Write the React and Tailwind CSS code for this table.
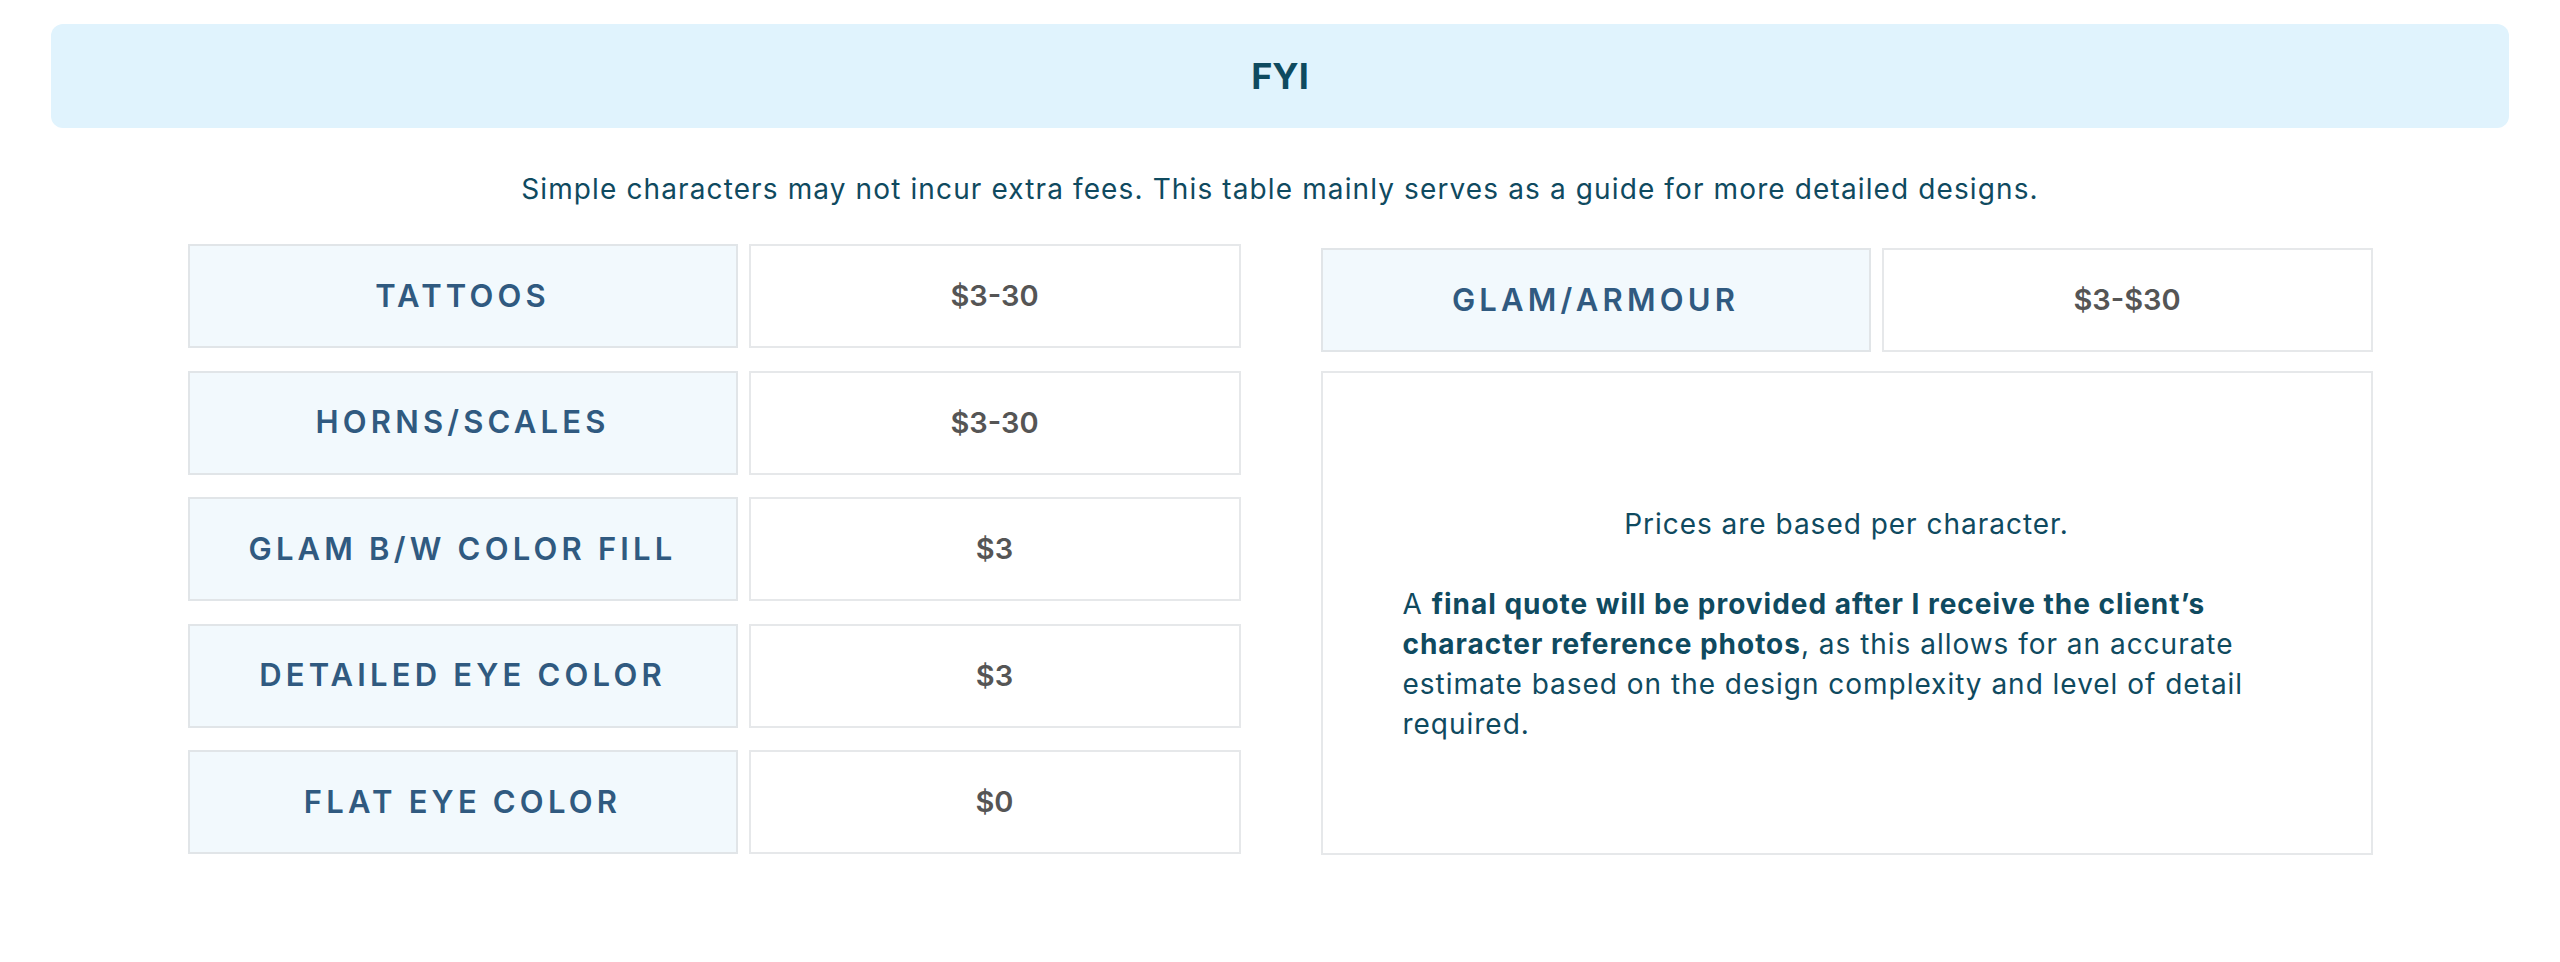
import React from "react";

const rows = [
  { label: "TATTOOS", price: "$3-30" },
  { label: "HORNS/SCALES", price: "$3-30" },
  { label: "GLAM B/W COLOR FILL", price: "$3" },
  { label: "DETAILED EYE COLOR", price: "$3" },
  { label: "FLAT EYE COLOR", price: "$0" },
];

function PriceRow({ label, price }) {
  return (
    <div className="flex gap-[11px] h-[104px]">
      <div className="w-[550px] flex items-center justify-center bg-[#f2f9fd] border-2 border-[#e1e5e8] text-[#305a80] font-semibold text-[31px] tracking-[0.135em]">
        {label}
      </div>
      <div className="flex-1 flex items-center justify-center bg-white border-2 border-[#e6e8ea] text-[#555555] font-semibold text-[29px]">
        {price}
      </div>
    </div>
  );
}

export default function App() {
  return (
    <div
      className="bg-white w-full min-h-screen pt-6 px-[51px]"
      style={{ fontFamily: "Inter, 'Noto Sans', sans-serif" }}
    >
      <div className="h-[104px] rounded-xl bg-[#e0f3fd] flex items-center justify-center">
        <h1 className="text-[36px] font-bold text-[#0f4a5f]">FYI</h1>
      </div>

      <p className="text-center text-[28px] tracking-[0.04em] text-[#0f4a5f] mt-[40px]">
        Simple characters may not incur extra fees. This table mainly serves as a guide for more detailed designs.
      </p>

      <div className="flex justify-center gap-[80px] mt-[34px]">
        <div className="w-[1053px] flex flex-col gap-[22.5px]">
          {rows.map((r) => (
            <PriceRow key={r.label} label={r.label} price={r.price} />
          ))}
        </div>

        <div className="w-[1052px] flex flex-col gap-[19px] mt-[4px]">
          <PriceRow label="GLAM/ARMOUR" price="$3-$30" />
          <div className="h-[484px] border-2 border-[#e6e8ea] flex flex-col justify-center px-[80px] pt-[22px] text-[28px] tracking-[0.035em] leading-[40px] text-[#0f4a5f]">
            <p className="text-center">Prices are based per character.</p>
            <p className="h-[40px]"></p>
            <p className="whitespace-nowrap">
              A <strong className="font-bold">final quote will be provided after I receive the client’s</strong>
              <br />
              <strong className="font-bold">character reference photos</strong>, as this allows for an accurate
              <br />
              estimate based on the design complexity and level of detail
              <br />
              required.
            </p>
          </div>
        </div>
      </div>
    </div>
  );
}
